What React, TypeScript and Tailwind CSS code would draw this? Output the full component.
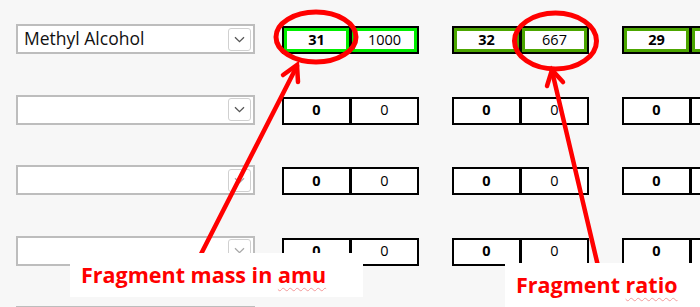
import React from 'react'

type Pair = { mass: string; ratio: string; tone?: 'lime' | 'dark' }

type Row = { name: string; pairs: Pair[]; faded?: boolean }

const rows: Row[] = [
    {
        name: 'Methyl Alcohol',
        pairs: [
            { mass: '31', ratio: '1000', tone: 'lime' },
            { mass: '32', ratio: '667', tone: 'dark' },
            { mass: '29', ratio: '', tone: 'dark' },
        ],
    },
    { name: '', pairs: [{ mass: '0', ratio: '0' }, { mass: '0', ratio: '0' }, { mass: '0', ratio: '0' }] },
    { name: '', faded: true, pairs: [{ mass: '0', ratio: '0' }, { mass: '0', ratio: '0' }, { mass: '0', ratio: '0' }] },
    { name: '', faded: true, pairs: [{ mass: '0', ratio: '0' }, { mass: '0', ratio: '0' }, { mass: '0', ratio: '0' }] },
    { name: '', faded: true, pairs: [{ mass: '0', ratio: '0' }, { mass: '0', ratio: '0' }, { mass: '0', ratio: '0' }] },
]

function Dropdown({ name, faded }: { name: string; faded?: boolean }) {
    return (
        <div className="w-[239px] h-[30px] shrink-0 bg-white border-2 border-[#bdbdbd] flex items-center justify-between pl-[6px] pr-[2px]">
            <span className="text-[17.5px] text-[#111] leading-none">{name}</span>
            <div className="w-[23px] h-[23px] rounded-[3px] border border-[#d0d0d0] bg-white flex items-center justify-center">
                <svg width="11" height="7" viewBox="0 0 11 7" fill="none">
                    <path d="M1 1.2 L5.5 5.6 L10 1.2" stroke={faded ? '#a8a8a8' : '#555'} strokeWidth="1.3" />
                </svg>
            </div>
        </div>
    )
}

function Cell({ value, bold, tone, first }: { value: string; bold?: boolean; tone?: 'lime' | 'dark'; first?: boolean }) {
    const ring = tone === 'lime' ? 'border-[#00ee00]' : tone === 'dark' ? 'border-[#4ca600]' : 'border-transparent'
    return (
        <div className={`w-[69px] h-[28px] border-2 border-black bg-white ${first ? '' : '-ml-px'}`}>
            <div className={`h-full border-[3px] ${ring} flex items-center justify-center`}>
                <span className={`text-[14.5px] leading-none text-black ${bold ? 'font-bold' : ''}`}>{value}</span>
            </div>
        </div>
    )
}

function FragmentPair({ pair }: { pair: Pair }) {
    return (
        <div className="flex shrink-0">
            <Cell value={pair.mass} bold tone={pair.tone} first />
            <Cell value={pair.ratio} tone={pair.tone} />
        </div>
    )
}

export default function App() {
    return (
        <div className="relative w-[700px] h-[307px] overflow-hidden bg-[#f7f7f7] font-['Open_Sans',sans-serif]">
            <div className="flex flex-col gap-[40.5px] pt-[24px] pl-[16px]">
                {rows.map((row, i) => (
                    <div key={i} className="flex items-end gap-[27px]">
                        <Dropdown name={row.name} faded={row.faded} />
                        <div className="flex gap-[33px]">
                            {row.pairs.map((p, j) => <FragmentPair key={j} pair={p} />)}
                        </div>
                    </div>
                ))}
            </div>

            {/* annotations */}
            <svg className="absolute inset-0" width="700" height="307" fill="none" stroke="#ff0000" strokeLinecap="round">
                <ellipse cx="316" cy="37" rx="40" ry="25" strokeWidth="5" />
                <ellipse cx="555.5" cy="41" rx="41" ry="28" strokeWidth="5" />
                <path d="M297 66 L200 256" strokeWidth="4.5" />
                <path d="M283 75 L297 65 L298 82" strokeWidth="4.5" />
                <path d="M552 71 L598 266" strokeWidth="4.5" />
                <path d="M547 86 L552 70 L563 82" strokeWidth="4.5" />
            </svg>

            <div className="absolute left-[70px] top-[253px] w-[293px] h-[44px] bg-white flex items-center pl-[11px]">
                <span className="text-[21.5px] font-bold text-[#ff0000] leading-none">
                    Fragment mass in{' '}
                    <span className="underline decoration-wavy decoration-[#f29a9a] decoration-1 underline-offset-[4px]">amu</span>
                </span>
            </div>
            <div className="absolute left-[505px] top-[263px] w-[195px] h-[44px] bg-white flex items-center pl-[11px]">
                <span className="text-[21.5px] font-bold text-[#ff0000] leading-none">
                    Fragment{' '}
                    <span className="underline decoration-wavy decoration-[#f29a9a] decoration-1 underline-offset-[4px]">ratio</span>
                </span>
            </div>
        </div>
    )
}
